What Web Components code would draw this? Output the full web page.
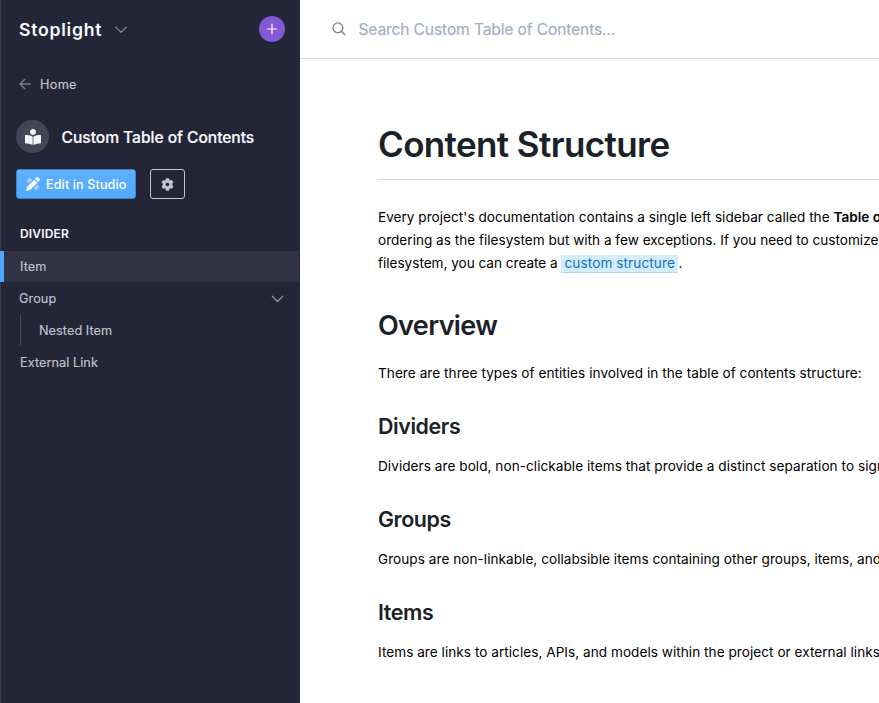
<!DOCTYPE html>
<html lang="en">
<head>
<meta charset="utf-8">
<title>Content Structure</title>
<style>
html,body{margin:0;height:100%;overflow:hidden;background:#fff}
body{font-family:Inter,"Liberation Sans",sans-serif}
</style>
</head>
<body>
<docs-app></docs-app>
<script>
const define = (name, html) => {
  const template = document.createElement('template');
  template.innerHTML = html;
  customElements.define(name, class extends HTMLElement {
    connectedCallback() {
      if (!this.shadowRoot) this.attachShadow({ mode: 'open' }).append(template.content.cloneNode(true));
    }
  });
};

define('brand-bar', `
<style>
:host{display:flex;align-items:center;height:58px;padding:0 15px 0 18px}
.name{font-size:17.6px;font-weight:600;letter-spacing:.76px;color:#f7fafc;line-height:24px;padding-top:2px}
.chev{margin-left:13px;margin-top:1px}
.add{margin-left:auto;width:26px;height:26px;border-radius:50%;background:#805ad5;display:grid;place-items:center}
svg{display:block}
</style>
<span class="name">Stoplight</span>
<svg class="chev" width="12" height="8" viewBox="0 0 12 8" fill="none" stroke="#8b909f" stroke-width="1.2" stroke-linecap="round" stroke-linejoin="round"><path d="M.8 1.2 6 6.4 11.2 1.2"/></svg>
<span class="add"><svg width="12" height="12" viewBox="0 0 12 12" stroke="#fff" stroke-width="1.2" stroke-linecap="round"><path d="M1.2 6h9.6M6 1.2v9.6"/></svg></span>`);

define('back-link', `
<style>
:host{display:flex;align-items:center;height:20px;margin-top:16px;padding-left:18px;font-size:12.7px;letter-spacing:.3px;color:#c7c9d1;line-height:20px}
svg{margin-right:9px}
span{padding-top:2px;-webkit-text-stroke:.15px}
</style>
<svg width="12" height="12" viewBox="0 0 12 12" fill="none" stroke="#777b89" stroke-width="1.5" stroke-linecap="round" stroke-linejoin="round"><path d="M11.2 6H1.2M5.8 1.2 1 6l4.8 4.8"/></svg>
<span><slot></slot></span>`);

define('project-title', `
<style>
:host{display:flex;align-items:center;margin-top:26px;padding-left:15px;height:33px;color:#f7fafc;font-size:15.6px;font-weight:500;white-space:nowrap}
.icon{width:33px;height:33px;border-radius:50%;background:#444656;display:grid;place-items:center;margin-right:12.600px}
.t{letter-spacing:-.04px;-webkit-text-stroke:.2px;padding-top:2px}
</style>
<span class="icon"><svg width="16" height="16" viewBox="0 0 512 512" fill="#f1f5f9"><path d="M352 96c0-53-43-96-96-96s-96 43-96 96 43 96 96 96 96-43 96-96zM233.600 241.100c-59.300-36.300-155.300-46.900-209.300-49C11 191.600 0 202.100 0 215.100v222.800c0 12.300 9.900 22.500 22.500 23.100 47.600 2.300 138.900 12.400 202 43.600 9.600 4.800 20.900-1.900 20.900-12.400V261.400c0-8.400-4.400-15.800-11.800-20.300zM487.700 192.100c-54 2.100-150 12.700-209.300 49-7.400 4.500-11.800 11.900-11.800 20.300v230.800c0 10.500 11.300 17.200 20.900 12.400 63.100-31.200 154.400-41.300 202-43.600 12.600-.6 22.500-10.800 22.500-23.100V215.100c0-13-11-23.500-24.300-23z"/></svg></span>
<span class="t"><slot></slot></span>`);

define('project-actions', `
<style>
:host{display:flex;gap:14px;margin-top:16px;padding-left:15px;height:30px}
span{box-sizing:border-box;display:flex;align-items:center;border-radius:3px}
.edit{width:120px;padding-left:9px;background:linear-gradient(#60b1fe,#51a9fc);border:1px solid #3f83c2;color:#fff;font-size:12.6px;font-weight:500;letter-spacing:.12px;white-space:nowrap}
.edit svg{margin-right:6px;flex:none}
.gear{width:35px;justify-content:center;border:1px solid #c2c4cc}
</style>
<span class="edit"><svg width="14" height="14" viewBox="0 0 14 14"><g fill="#fff" opacity=".42"><path d="M.9 3.300 3.300.9a.8.800 0 0 1 1.100 0L6.500 3 3.100 6.500.9 4.400a.8.800 0 0 1 0-1.100zM10.900 7.500 13.100 9.700a.8.800 0 0 1 0 1.100l-2.300 2.300a.8.800 0 0 1-1.100 0L7.500 10.900z"/></g><path fill="#fff" d="M8.300 2.700 11.300 5.700 4 13 1 13.700a.6.600 0 0 1-.7-.7L1 10zM9.100 1.900 10.500.5a1.100 1.100 0 0 1 1.600 0l1.400 1.400a1.100 1.100 0 0 1 0 1.600L12.100 4.900z"/></svg><slot></slot></span>
<span class="gear"><svg width="13" height="13" viewBox="0 0 13 13"><path fill="#c5c7cf" stroke="#c5c7cf" stroke-width=".5" stroke-linejoin="round" fill-rule="evenodd" d="M5.200.4h2.600l.4 1.700 1.100.6 1.600-.5 1.300 2.200-1.200 1.200v1.600l1.200 1.200-1.300 2.200-1.600-.5-1.100.6-.4 1.700H5.200l-.4-1.700-1.100-.6-1.600.5L.8 8.400 2 7.200V5.600L.8 4.400l1.300-2.200 1.600.5 1.100-.6zM6.500 4.400a2 2 0 1 0 0 4.100 2 2 0 0 0 0-4.100z"/></svg></span>`);

define('toc-divider', `
<style>:host{display:block;margin-top:24px;padding-left:19px;height:28px;font-size:12px;font-weight:600;letter-spacing:.17px;line-height:22px;color:#f7fafc}</style>
<slot></slot>`);

define('toc-item', `
<style>
:host{display:flex;align-items:center;box-sizing:border-box;height:31px;margin-bottom:1px;padding:0 15px 0 19px;font-size:12.7px;letter-spacing:.06px;color:#c0c2cb;white-space:nowrap}
:host([active]){background:#303346;margin:0 1px 1px -1px;padding-left:16px;border-left:4px solid #4fa9ff}
:host([nested]){margin-left:19px;padding-left:18px;border-left:1px solid #444758}
:host([group]){padding-left:18px}
span{-webkit-text-stroke:.15px}
svg{display:none;margin-left:auto}
:host([group]) svg{display:block}
</style>
<span><slot></slot></span>
<svg width="14" height="8" viewBox="0 0 14 8" fill="none" stroke="#93a0b2" stroke-width="1.2" stroke-linecap="round" stroke-linejoin="round"><path d="M1.200 1.200 6.500 6.500 11.800 1.200"/></svg>`);

define('side-bar', `
<style>:host{display:block;box-sizing:border-box;background:#242638;border-left:1px solid #383b4c;height:100%}</style>
<brand-bar></brand-bar>
<back-link>Home</back-link>
<project-title>Custom Table of Contents</project-title>
<project-actions>Edit in Studio</project-actions>
<toc-divider>DIVIDER</toc-divider>
<toc-item active>Item</toc-item>
<toc-item group>Group</toc-item>
<toc-item nested>Nested Item</toc-item>
<toc-item>External Link</toc-item>`);

define('search-bar', `
<style>
:host{display:flex;align-items:center;box-sizing:border-box;height:59px;padding-left:32px;border-bottom:1px solid #d3e0ea;font-size:15.6px;letter-spacing:-.13px;color:#a0aec0;white-space:nowrap}
svg{margin-right:12.400px}
span{-webkit-text-stroke:.15px}
</style>
<svg width="14" height="14" viewBox="0 0 14 14" fill="none" stroke="#718096" stroke-width="1.3" stroke-linecap="round"><circle cx="5.900" cy="5.800" r="4.900"/><path d="m9.600 9.500 3.300 3.300"/></svg>
<span><slot></slot></span>`);

define('doc-article', `
<style>
:host{display:block;padding-left:78px;color:#000;white-space:nowrap;overflow:hidden}
h1,h2,h3,p{margin:0}
h1,h2,h3{color:#1a2127;font-weight:600}
h1{margin-top:60px;height:60px;border-bottom:1px solid #cfd9e2;font-size:35px;line-height:50px;letter-spacing:-.63px}
h2{margin-top:33px;font-size:27px;line-height:36px;letter-spacing:-.64px}
h3{margin-top:27px;font-size:21.4px;line-height:28px;letter-spacing:-.4px}
p{font-size:13.6px;line-height:23px}
h1+p{margin-top:26px}
h2+p{margin-top:18px}
h3+p{margin-top:15px}
.a{letter-spacing:.018px}.b{letter-spacing:.002px}.c{letter-spacing:-.02px}
a{display:inline-block;height:17px;line-height:17px;padding:0 3px;background:#d3edfc;border-bottom:1px solid #b9d9ea;color:#0f6fc9;letter-spacing:.09px;margin-right:.5px;text-decoration:none}
b{font-weight:600}
</style>
<h1>Content Structure</h1>
<p><span class="a">Every project's documentation contains a single left sidebar called the <b>Table of Contents</b></span><br><span class="b">ordering as the filesystem but with a few exceptions. If you need to customize</span><br><span class="c">filesystem, you can create a <a>custom structure</a>.</span></p>
<h2>Overview</h2>
<p style="letter-spacing:.044px">There are three types of entities involved in the table of contents structure:</p>
<h3>Dividers</h3>
<p style="letter-spacing:.045px">Dividers are bold, non-clickable items that provide a distinct separation to signify</p>
<h3>Groups</h3>
<p style="letter-spacing:.035px">Groups are non-linkable, collabsible items containing other groups, items, and</p>
<h3>Items</h3>
<p style="letter-spacing:.034px">Items are links to articles, APIs, and models within the project or external links</p>`);

define('docs-app', `
<style>
:host{display:grid;grid-template-columns:300px minmax(0,1fr);height:100vh;overflow:hidden}
main{min-width:0;overflow:hidden}
</style>
<side-bar></side-bar>
<main><search-bar>Search Custom Table of Contents...</search-bar><doc-article></doc-article></main>`);
</script>
</body>
</html>
